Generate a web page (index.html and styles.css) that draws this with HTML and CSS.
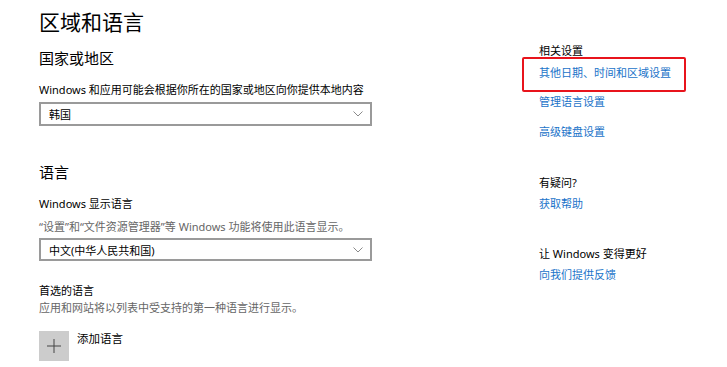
FILE: index.html
```html
<!DOCTYPE html>
<html lang="zh-CN">
<head>
  <meta charset="UTF-8" />
  <meta name="viewport" content="width=device-width, initial-scale=1.0" />
  <title>区域和语言</title>
  <link rel="stylesheet" href="styles.css">
</head>
<body>
<div class="page">
  <!-- 左侧主要设置 -->
  <div class="main">
    <h1 class="title">区域和语言</h1>

    <h2 class="section region">国家或地区</h2>
    <p class="label region-label">Windows 和应用可能会根据你所在的国家或地区向你提供本地内容</p>
    <div class="select first">
      <span>韩国</span>
      <svg class="chevron" width="10" height="6" viewBox="0 0 10 6"><polyline points="0.5,0.5 5,5 9.5,0.5" fill="none" stroke="#8a8a8a" stroke-width="1"/></svg>
    </div>

    <h2 class="section lang">语言</h2>
    <p class="label display-label">Windows 显示语言</p>
    <p class="desc display-desc">“设置”和“文件资源管理器”等 Windows 功能将使用此语言显示。</p>
    <div class="select second">
      <span>中文(中华人民共和国)</span>
      <svg class="chevron" width="10" height="6" viewBox="0 0 10 6"><polyline points="0.5,0.5 5,5 9.5,0.5" fill="none" stroke="#8a8a8a" stroke-width="1"/></svg>
    </div>

    <p class="label pref-label">首选的语言</p>
    <p class="desc pref-desc">应用和网站将以列表中受支持的第一种语言进行显示。</p>
    <div class="add-row">
      <div class="add-btn">
        <svg width="14" height="14" viewBox="0 0 14 14"><path d="M7 0V14M0 7H14" stroke="#444" stroke-width="1"/></svg>
      </div>
      <span class="add-text">添加语言</span>
    </div>
  </div>

  <!-- 右侧相关链接 -->
  <div class="side">
    <p class="side-title">相关设置</p>
    <a class="link highlight link-1">其他日期、时间和区域设置</a>
    <a class="link link-2">管理语言设置</a>
    <a class="link link-3">高级键盘设置</a>

    <p class="side-title help">有疑问?</p>
    <a class="link link-4">获取帮助</a>

    <p class="side-title better">让 Windows 变得更好</p>
    <a class="link link-4">向我们提供反馈</a>
  </div>
</div>
</body>
</html>
```

FILE: styles.css
```css
/* 整体 */
body {
  margin: 0;
  background: #fff;
  color: #000;
  font-family: "Noto Sans", "Noto Sans CJK SC", sans-serif;
}

p, h1, h2 {
  margin: 0;
  font-weight: normal;
}

.page {
  display: flex;
  padding: 10px 0 0 39px;
}

/* 左栏 */
.main {
  width: 333px;
}

.title {
  font-size: 21px;
  line-height: 25px;
}

.section {
  font-size: 15px;
  line-height: 20px;
}

.region { margin-top: 13px; }
.lang { margin-top: 36px; }

.label {
  font-size: 11px;
  line-height: 16px;
}

.region-label { margin-top: 14px; }
.display-label { margin-top: 14px; }
.pref-label { margin-top: 22px; }

.desc {
  font-size: 11px;
  line-height: 16px;
  color: #666;
}

.display-desc { margin-top: 7px; }
.pref-desc { margin-top: 1px; }

/* 下拉框 */
.select {
  display: flex;
  align-items: center;
  justify-content: space-between;
  box-sizing: border-box;
  width: 333px;
  border: 2px solid #9a9a9a;
  padding: 0 7px 0 8px;
  font-size: 11px;
}

.select.first {
  height: 24px;
  margin-top: 4px;
}

.select.second {
  height: 23px;
  margin-top: 3px;
}

/* 添加语言 */
.add-row {
  display: flex;
  gap: 8px;
  margin-top: 15px;
}

.add-btn {
  width: 30px;
  height: 30px;
  background: #cccccc;
  display: flex;
  align-items: center;
  justify-content: center;
}

.add-text {
  font-size: 11.5px;
  line-height: 16px;
}

/* 右栏 */
.side {
  margin-left: 167px;
  padding-top: 33px;
  display: flex;
  flex-direction: column;
  align-items: flex-start;
}

.side-title {
  font-size: 11px;
  line-height: 16px;
}

.help { margin-top: 35px; }
.better { margin-top: 34px; }

.link {
  font-size: 11px;
  line-height: 16px;
  color: #1a73c9;
  cursor: pointer;
}

.link-1 { margin-top: 6px; }
.link-2 { margin-top: 13px; }
.link-3 { margin-top: 14px; }
.link-4 { margin-top: 5px; }

/* 红色标注框 */
.highlight {
  position: relative;
}

.highlight::after {
  content: "";
  position: absolute;
  top: -8px;
  bottom: -11px;
  left: -17px;
  right: -15px;
  border: 2px solid #e8141c;
  border-radius: 2px;
}
```
